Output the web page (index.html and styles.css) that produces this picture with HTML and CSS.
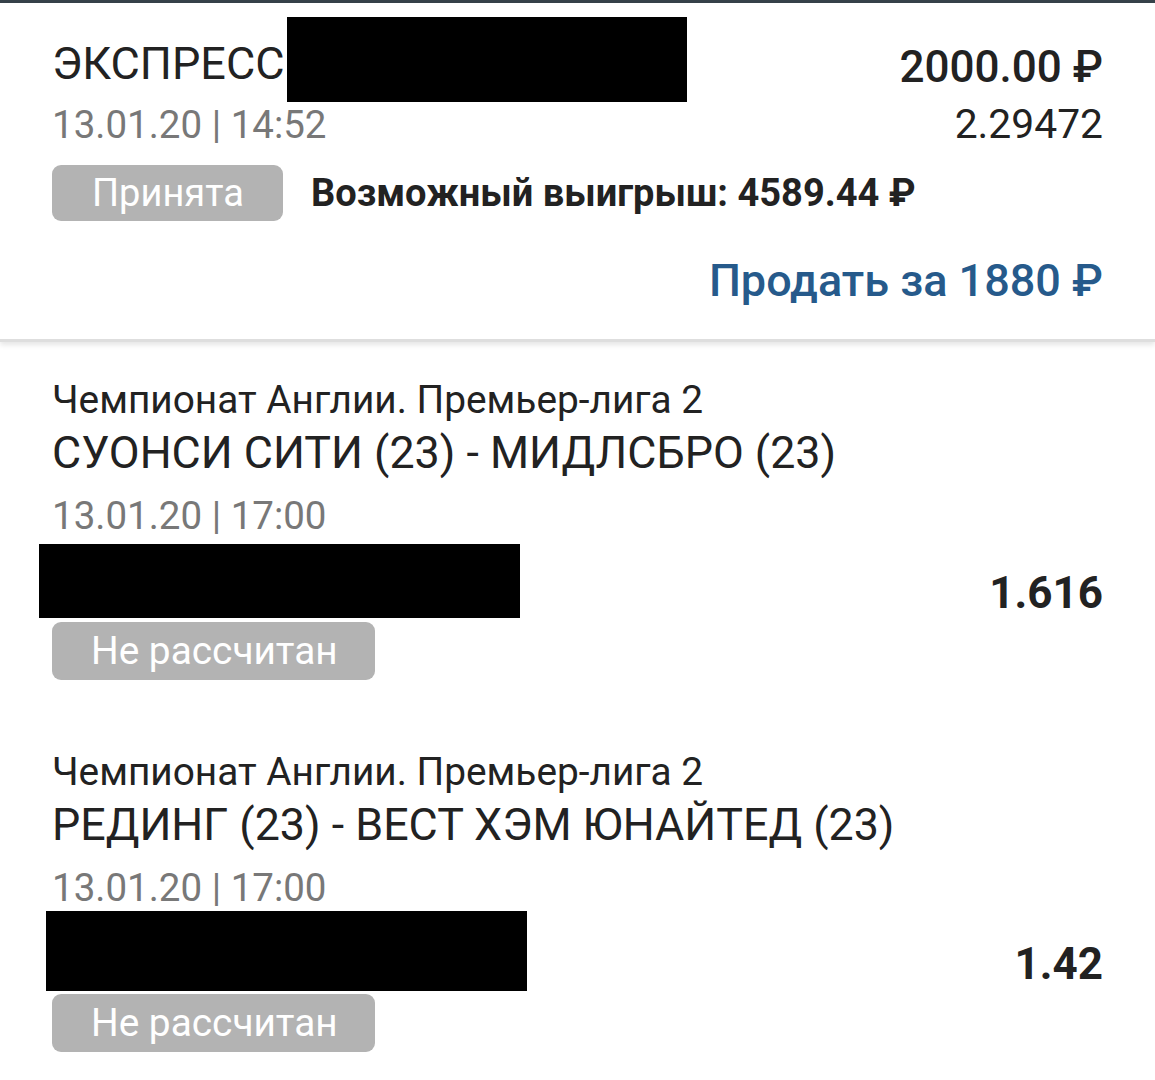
FILE: index.html
```html
<!DOCTYPE html>
<html lang="ru">
<head>
<meta charset="utf-8">
<title>Экспресс</title>
<link rel="stylesheet" href="styles.css">
</head>
<body>
<div class="topbar"></div>
<section class="bet">
  <div class="row row-head">
    <div class="title-group">
      <span class="title">ЭКСПРЕСС</span>
      <span class="redact redact-title"></span>
    </div>
    <span class="amount">2000.00 ₽</span>
  </div>
  <div class="row row-date">
    <span class="date">13.01.20 | 14:52</span>
    <span class="coef">2.29472</span>
  </div>
  <div class="row row-status">
    <span class="badge badge-accepted">Принята</span>
    <span class="win">Возможный выигрыш: 4589.44 ₽</span>
  </div>
  <div class="row row-sell">
    <span class="sell">Продать за 1880 ₽</span>
  </div>
</section>

<section class="event">
  <div class="league">Чемпионат Англии. Премьер-лига 2</div>
  <div class="teams">СУОНСИ СИТИ (23) - МИДЛСБРО (23)</div>
  <div class="date date-event">13.01.20 | 17:00</div>
  <div class="row row-pick pick-1">
    <span class="redact redact-pick-1"></span>
    <span class="odds odds-1">1.616</span>
  </div>
  <span class="badge badge-pending">Не рассчитан</span>
</section>

<section class="event">
  <div class="league">Чемпионат Англии. Премьер-лига 2</div>
  <div class="teams">РЕДИНГ (23) - ВЕСТ ХЭМ ЮНАЙТЕД (23)</div>
  <div class="date date-event">13.01.20 | 17:00</div>
  <div class="row row-pick pick-2">
    <span class="redact redact-pick-2"></span>
    <span class="odds odds-2">1.42</span>
  </div>
  <span class="badge badge-pending badge-pending-2">Не рассчитан</span>
</section>
</body>
</html>
```
FILE: styles.css
```css
* { box-sizing: border-box; }
html, body { margin: 0; padding: 0; background: #ffffff; }
body {
  font-family: Roboto, "Noto Sans", "Liberation Sans", sans-serif;
  color: #222222;
  width: 1155px;
  overflow: hidden;
}
.topbar { height: 3px; background: #36424a; }

.row { display: flex; justify-content: space-between; }

.bet {
  padding: 14px 52px 33px;
  border-bottom: 3px solid #dedede;
  box-shadow: 0 3px 5px rgba(0,0,0,0.10);
  position: relative;
}
.row-head { align-items: flex-start; height: 85px; }
.title-group { display: flex; align-items: flex-start; }
.title {
  font-size: 45px; line-height: 48px; margin-top: 23px; color: #222;
}
.redact { display: block; background: #000; }
.redact-title { width: 400px; height: 85px; margin-left: 2px; }
.amount {
  font-size: 44px; font-weight: 500; line-height: 52px; margin-top: 24px; color: #222;
}
.row-date { align-items: baseline; }
.date { font-size: 38.5px; line-height: 44px; color: #787878; }
.coef { font-size: 40.8px; line-height: 44px; color: #222; }

.row-status { justify-content: flex-start; align-items: baseline; margin-top: 18px; }
.badge {
  display: inline-block;
  background: #b3b3b3;
  color: #ffffff;
  border-radius: 9px;
  font-size: 38px;
  line-height: 56px;
  height: 56px;
  padding: 0 40px;
  white-space: nowrap;
}
.badge-accepted { width: 231px; }
.win { font-size: 38px; font-weight: 700; margin-left: 28px; color: #222; }

.row-sell { justify-content: flex-end; margin-top: 35px; }
.sell { font-size: 45px; font-weight: 500; line-height: 50px; color: #265a8b; }

.event { padding: 36px 52px 34px; }
.league { font-size: 38.8px; line-height: 44px; color: #222; }
.teams { font-size: 44.8px; line-height: 54px; margin-top: 4px; color: #222; }
.date-event { margin-top: 14px; }
.row-pick { align-items: flex-end; }
.pick-1 { margin-top: 6px; }
.pick-2 { margin-top: 1px; }
.redact-pick-1 { width: 481px; height: 74px; margin-left: -13px; }
.redact-pick-2 { width: 481px; height: 80px; margin-left: -6px; }
.odds { font-size: 44px; font-weight: 700; line-height: 48px; color: #222; }
.odds-1 { margin-bottom: 1px; }
.odds-2 { margin-bottom: 3px; }
.badge-pending { margin-top: 4px; width: 323px; height: 58px; line-height: 58px; font-size: 38.8px; padding: 0 39px; }
.badge-pending-2 { margin-top: 3px; }
```
